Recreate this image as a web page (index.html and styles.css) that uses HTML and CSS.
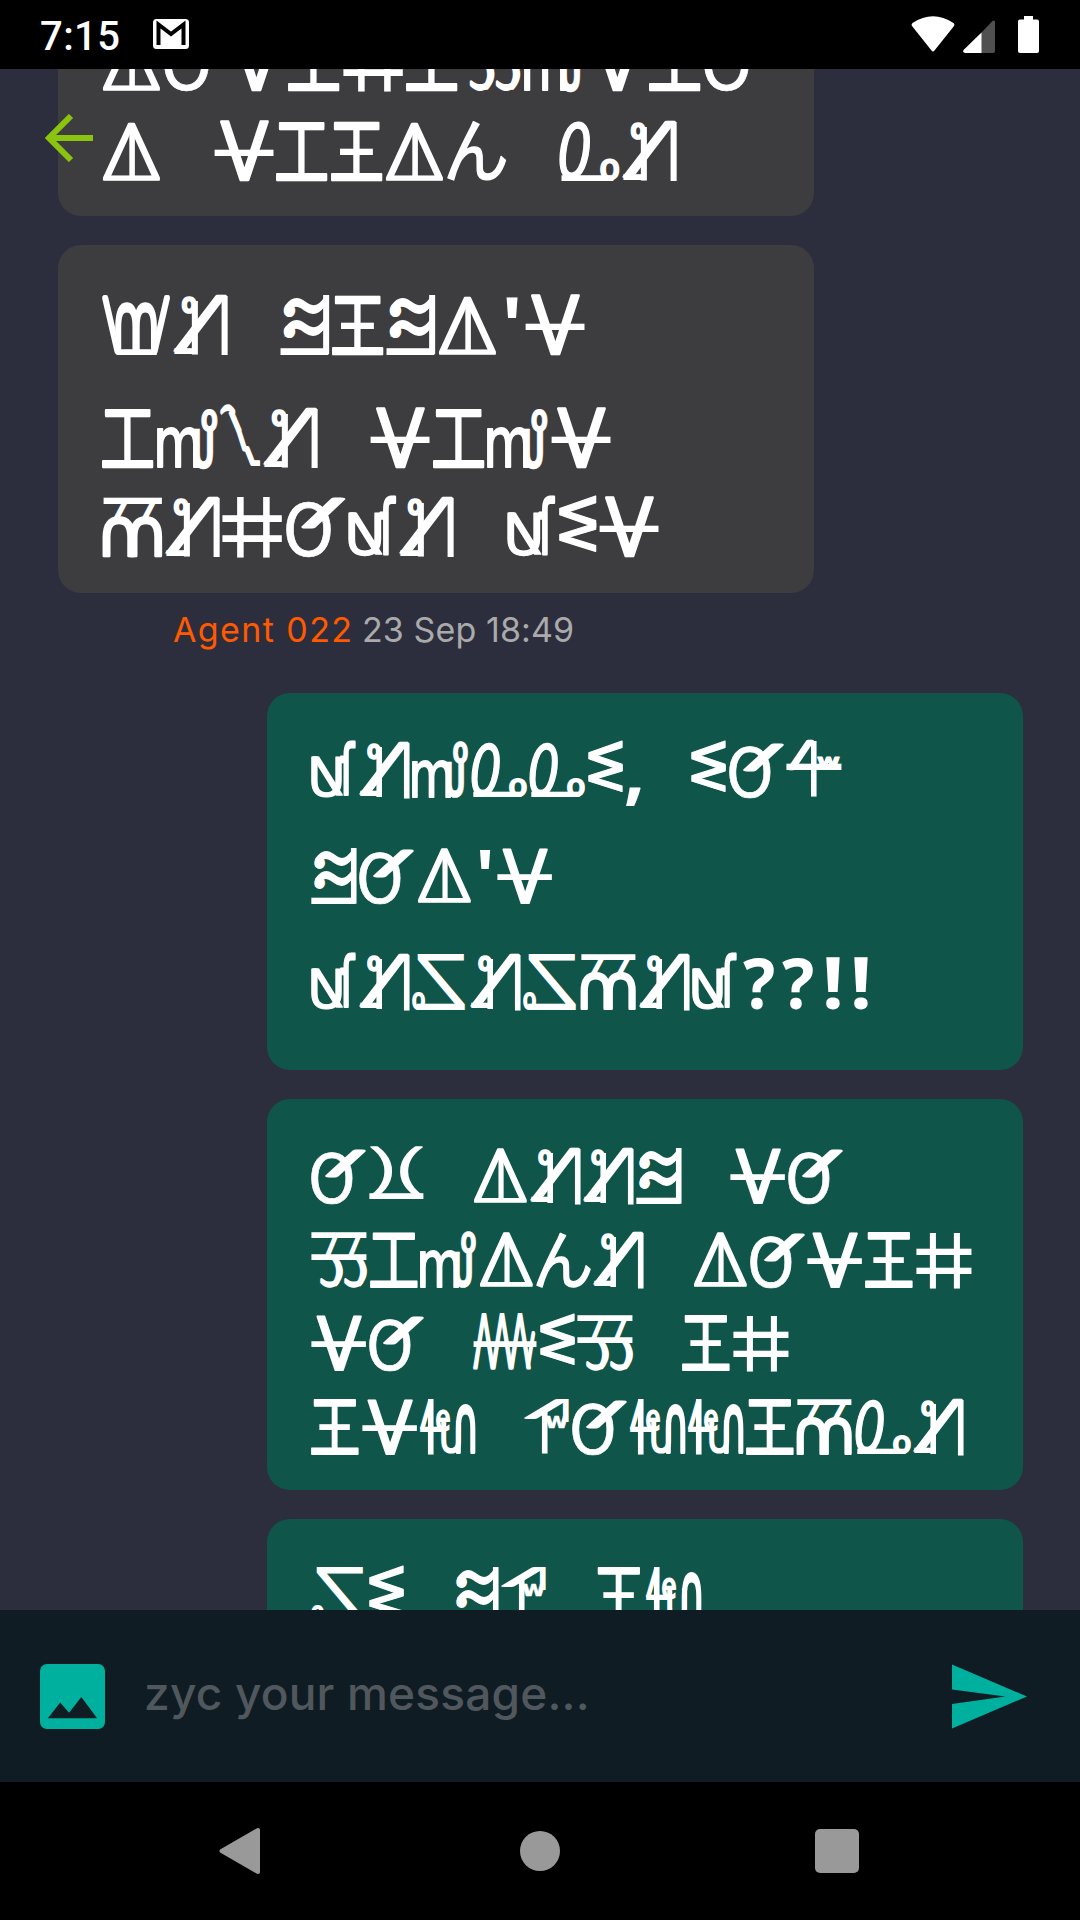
FILE: index.html
```html
<!DOCTYPE html>
<html lang="en">
<head>
<meta charset="utf-8">
<title>Secret chat</title>
<link rel="stylesheet" href="styles.css">
</head>
<body>
<div class="phone">
  <header class="status">
    <span class="clock">7:15</span>
    <svg class="mail" viewBox="0 0 36 30"><rect width="36" height="30" rx="3.500" fill="#fff"/><path d="M5.500 26V5.500L18 15 30.500 5.500V26" fill="none" stroke="#000" stroke-width="4"/></svg>
    <span class="spacer"></span>
    <svg class="wifi" viewBox="0 0 44 36"><path d="M1.500 7Q22-6.500 42.500 7q1.500 1.500.5 3L23.500 34.500q-1.500 2-3 0L1 10Q0 8.500 1.500 7z" fill="#fff"/></svg>
    <svg class="signal" viewBox="0 0 32 33"><path d="M18 13 29.500 1Q32-.5 32 2v29q0 2-2 2H18z" fill="#505050"/><path d="M18.500 12.500V33H2q-3-1-1-3.500z" fill="#fff"/></svg>
    <svg class="battery" viewBox="0 0 21 37"><path d="M6 0h9v3.500h4q2 0 2 2V35q0 2-2 2H2q-2 0-2-2V5.500q0-2 2-2h4z" fill="#fff"/></svg>
  </header>

  <main class="chat">
    <svg class="back" viewBox="0 0 48 48"><path d="M26 2 4 24l22 22M4 24h44" fill="none" stroke="#8bc40f" stroke-width="6"/></svg>

    <section class="bubble theirs first">
      <p class="line">⍋Ơ∀王⌗王羽m∀王Ơ</p>
      <p class="line">⍋ ∀工王⍋ん ՁИ</p>
    </section>
    <section class="bubble theirs second">
      <p class="line wide">ШИ ヨ王ヨ⍋'∀</p>
      <p class="line">工mʅИ ∀工m∀</p>
      <p class="line">而И⌗ƠⱳИ ⱳΣ∀</p>
    </section>
    <div class="meta"><span class="agent">Agent 022</span><time>23 Sep 18:49</time></div>
    <section class="bubble mine third">
      <p class="line">ⱳИmՁՁΣ, ΣƠ4</p>
      <p class="line">ヨƠ⍋'∀</p>
      <p class="line">ⱳИZИZ而Иⱳ??!!</p>
    </section>
    <section class="bubble mine fourth">
      <p class="line">Ơ⊻ ⍋ИИヨ ∀Ơ</p>
      <p class="line">羽工m⍋んИ ⍋Ơ∀王⌗</p>
      <p class="line">∀Ơ ₩Σ羽 王⌗</p>
      <p class="line">王∀ฟ ƤƠฟฟ王而ՁИ</p>
    </section>
    <section class="bubble mine fifth">
      <p class="line">ZΣ ヨƤ 王ฟ</p>
    </section>
  </main>

  <footer class="composer">
    <svg class="photo" viewBox="0 0 66 66"><rect width="66" height="66" rx="7" fill="#00b09e"/><path d="M8 55 20.500 39l9 10.500L42 33.500 58 55z" fill="#101c23"/></svg>
    <span class="hint">zyc your message...</span>
    <svg class="send" viewBox="0 0 76 65"><path d="M0 0 76 32.500 0 65V40l54-7.500L0 25.500z" fill="#00b09e"/></svg>
  </footer>

  <nav class="keys">
    <svg viewBox="0 0 48 48"><path d="M39 3v42L2.500 24z" fill="#999" stroke="#999" stroke-width="4" stroke-linejoin="round"/></svg>
    <svg viewBox="0 0 48 48"><circle cx="24" cy="24" r="20" fill="#999"/></svg>
    <svg viewBox="0 0 48 48"><rect x="2" y="2" width="44" height="44" rx="5" fill="#999"/></svg>
  </nav>
</div>
<script src="signs.js"></script>
</body>
</html>
```

FILE: styles.css
```css
* { box-sizing: border-box; }
body { margin: 0; background: #000; }
.phone {
  width: 1080px; height: 1920px;
  display: flex; flex-direction: column;
  overflow: hidden; background: #2c2e3e;
  font-family: Inter, "Noto Sans", sans-serif;
}
.status {
  flex: none; height: 69px; background: #000; color: #fff;
  display: flex; align-items: center; padding: 0 41px 0 40px;
}
.clock { font: 500 40px/69px Roboto, sans-serif; letter-spacing: 0.4px; padding-top: 3px; }
.mail { width: 36px; height: 30px; margin: 0 0 1px 33px; }
.spacer { flex: 1; }
.wifi { width: 44px; height: 36px; margin-bottom: 1px; }
.signal { width: 32px; height: 33px; margin: 4px 23px 0 8px; }
.battery { width: 21px; height: 37px; }

.chat {
  flex: none; position: relative; height: 1541px;
  overflow: hidden; display: flex; flex-direction: column;
}
.back { position: absolute; left: 45px; top: 45px; width: 48px; height: 48px; }
.bubble {
  flex: none; width: 756px; border-radius: 23px;
  display: flex; flex-direction: column;
  margin-bottom: 29px; padding-left: 44px;
}
.theirs { background: #3d3d3f; margin-left: 58px; --unit: 1.08; }
.mine { background: #10554a; margin-left: 267px; --unit: 1; }
.first { height: 187px; margin-top: -40px; padding-top: 2px; gap: 30px; }
.second { height: 348px; padding-top: 50px; gap: 28.500px; margin-bottom: 0; }
.third { height: 377px; padding-top: 49px; gap: 50px; }
.fourth { height: 391px; padding-top: 49px; gap: 27.500px; }
.fifth { height: 391px; padding-top: 48px; }
.line {
  margin: 0; display: flex; white-space: pre; color: #fff;
  gap: calc(2.5px * var(--unit)); height: calc(56px * var(--unit));
  font: 40px "DejaVu Sans", "Noto Sans CJK JP", sans-serif;
}
.wide { margin-bottom: 24px; }
.sign { flex: none; overflow: visible; fill: #fff; stroke: #fff; stroke-linejoin: round; }

.meta {
  flex: none; height: 100px; padding: 15px 0 0 173px;
  display: flex; gap: 11px; font-size: 34px; line-height: 44px;
}
.agent { color: #ff5a00; width: 178px; letter-spacing: 1.4px; white-space: nowrap; }
.meta time { color: #aaa; white-space: nowrap; letter-spacing: 0.1px; }

.composer {
  flex: none; height: 172px; background: #101c23;
  display: flex; align-items: center; padding: 0 53px 0 40px;
}
.photo { width: 65px; height: 65px; }
.hint { flex: 1; margin-left: 39px; padding-bottom: 7px; color: #50585d; font-size: 46px; font-weight: 500; letter-spacing: 0.2px; }
.send { width: 75px; height: 65px; }

.keys { flex: 1; background: #000; display: flex; justify-content: center; gap: 249px; padding-top: 45px; }
.keys svg { width: 48px; height: 48px; }
```

FILE: signs.js
```javascript
// Each sign is set on a 56px tall line from one or more characters:
// [advance, [character, x, y, width, height, font, outline, mirrored], ...]
const SANS = '100px "DejaVu Sans"';
const BOLD = 'bold 100px "DejaVu Sans"';
const SLANT = 'oblique 100px "DejaVu Sans"';
const NOTO = 'bold 100px "Noto Sans"';
const LIGHT = '300 100px "Open Sans"';
const CJK = '100px "Noto Sans CJK JP"';
const SIGNS = {
  "⍋": [54.5, ["Δ", 0, 1, 54.5, 54, LIGHT, 2], ["|", 25, 5, 5.5, 48, SANS, 0]],
  "∀": [55.5, ["V", 5, 0, 46, 56, SANS, 3], ["—", 0, 25.5, 55.5, 6.5, SANS, 0]],
  "工": [48, ["工", 0, 1, 48, 55, CJK, 3]],
  "王": [48, ["工", 0, 0, 48, 56, CJK, 3], ["—", 8, 25, 31, 6.5, SANS, 0]],
  "⌗": [56, ["|", 13.5, 0, 6.5, 56, SANS, 0], ["|", 37.5, 0, 6.5, 56, SANS, 0], ["—", 0, 16, 56, 7, SANS, 0], ["—", 0, 35, 56, 7, SANS, 0]],
  "羽": [56, ["—", 0, 0, 56, 6.5, SANS, 0], ["—", 0, 22, 56, 6.5, SANS, 0], ["/", 14, 3, 13, 22, LIGHT, 10], ["/", 37, 3, 13, 22, LIGHT, 10], [")", 20, 25, 12, 29, SANS, 8], ["‿", 9, 46, 19, 10, SANS, 10], [")", 44, 25, 12, 29, SANS, 8], ["‿", 33, 46, 19, 10, SANS, 10]],
  "m": [56, ["m", 0, 18, 39, 38, SANS, 3], ["U", 34, 19, 18, 37, BOLD, 1], ["o", 41, 0, 15, 22, BOLD, 2]],
  "ん": [55, ["ん", 0, 0, 55, 56, CJK, 2]],
  "Ձ": [56, ["0", 0, 0, 29, 54, SLANT, 2], ["—", 2, 49, 49, 6, SANS, 0], ["o", 38, 35, 18, 20, BOLD, 0]],
  "И": [50.5, ["/", 0, 0, 50, 53, LIGHT, 2], ["|", 44.5, 1, 6, 55, SANS, 0], ["|", 17, 6, 6, 49, SANS, 0], ["o", 8, 1, 14, 17, BOLD, 5], ["—", 1, 48, 20, 6, SANS, 0]],
  "Ш": [63, ["\\", 0, 0, 17, 55, LIGHT, 8], ["/", 46, 0, 17, 55, LIGHT, 8], ["—", 13, 49, 38, 6, SANS, 0], ["∩", 12, 7, 22, 46, SANS, 5], ["∩", 29, 7, 22, 46, SANS, 5]],
  "ヨ": [45.5, ["~", 4, 1, 38, 19, SANS, 0], ["~", 4, 21, 38, 19, SANS, 0], ["•", 3, 8, 11, 12, SANS, 0], ["•", 3, 28, 11, 12, SANS, 0], ["|", 39.5, 0, 6, 55, SANS, 0], ["—", 0, 49, 45, 7, SANS, 0]],
  "ʅ": [37.5, ["⌒", 0, -3, 14, 10, SANS, 14], ["\\", 8, 2, 12, 20, LIGHT, 16], ["\\", 15, 18, 10, 22, LIGHT, 18], ["\\", 22, 36, 11, 18, LIGHT, 18], ["—", 29, 47, 8, 6, SANS, 0]],
  "而": [56, ["—", 1, 0, 55, 6.5, SANS, 0], ["/", 9, 3, 15, 21, LIGHT, 9], ["/", 35, 3, 15, 21, LIGHT, 9], ["∩", 0, 18, 31, 38, SANS, 4], ["∩", 25, 18, 31, 38, SANS, 4]],
  "ⱳ": [45.5, ["\\", 1, 14, 31, 40, LIGHT, 3], ["U", 0, 14, 31, 41, SANS, 2], ["ſ", 29, -2, 16, 56, SANS, 4]],
  "Σ": [35, ["<", 0, -2, 35, 31, BOLD, 2], ["<", 0, 23, 35, 28, BOLD, 2]],
  "Ơ": [55, ["O", 0, 4, 42, 52, SANS, 1], ["/", 14, 1, 41, 28, LIGHT, 8]],
  "4": [56, ["/", 1, -2, 27, 30, LIGHT, 6], ["|", 24.5, -2, 6, 56, SANS, 0], ["—", 0, 21, 56, 7, SANS, 0], ["w", 31, 14, 23, 11, BOLD, 5]],
  "Z": [55, ["Z", 4, 0, 49, 56, SANS, 0, true], ["o", 0, 38, 13, 18, BOLD, 0]],
  "⊻": [55, [")", 1, 0, 23, 49, LIGHT, 3], ["(", 31, 0, 23, 49, LIGHT, 3], ["—", 0, 44.5, 55, 6.5, SANS, 0]],
  "₩": [64, ["Λ", 0, -2, 22, 56, SANS, 4], ["Λ", 18, -2, 22, 56, SANS, 4], ["Λ", 36, -2, 22, 56, SANS, 4], ["/", 53, 16, 9, 38, LIGHT, 14], ["—", 0, 26, 64, 6.5, SANS, 0]],
  "ฟ": [55.5, ["/", 0, 1, 12, 30, LIGHT, 10], ["|", 7.5, 0, 6, 55, SANS, 0], ["—", 0, 27, 22, 6, SANS, 0], ["e", 16, 9, 14, 23, BOLD, 0], ["U", 21, 20, 20, 34, SANS, 5], ["∩", 35.5, 5, 20, 50, SANS, 5]],
  "Ƥ": [45.5, ["/", 0, 0, 44, 20, LIGHT, 7], ["|", 17.5, 10, 6, 45, SANS, 0], ["|", 38.5, 1, 6, 23, SANS, 0], ["w", 21, 17, 23, 12, BOLD, 2]],
  "'": [10.5, ["'", 0, 2, 10.5, 19, NOTO, 0]],
  ",": [15, [",", 0, 45, 15, 19, NOTO, 0]],
  "?": [31, ["?", 0, 3, 31, 53, NOTO, 0]],
  "!": [14, ["!", 0, 3, 14, 53, NOTO, 0]]
};
// Side space round punctuation: [before, after]
const ROOM = { "'": [6, 4.5], "?": [3, 3], "!": [7, 5], ",": [1, 1] };
const NS = "http://www.w3.org/2000/svg";
const pen = document.createElement("canvas").getContext("2d");

function piece([ch, x, y, w, h, font, outline, mirrored], before) {
  pen.font = font;
  const m = pen.measureText(ch);
  const left = m.actualBoundingBoxLeft + outline / 2;
  const up = m.actualBoundingBoxAscent + outline / 2;
  const sx = w / (left + m.actualBoundingBoxRight + outline / 2);
  const sy = h / (up + m.actualBoundingBoxDescent + outline / 2);
  const text = document.createElementNS(NS, "text");
  text.textContent = ch;
  text.style.font = font;
  text.setAttribute("stroke-width", outline);
  const dx = before + x + (mirrored ? w - left * sx : left * sx);
  text.setAttribute("transform", `matrix(${mirrored ? -sx : sx} 0 0 ${sy} ${dx} ${y + up * sy})`);
  return text;
}

for (const line of document.querySelectorAll(".line")) {
  const unit = parseFloat(getComputedStyle(line).getPropertyValue("--unit"));
  const chars = [...line.textContent];
  line.textContent = "";
  for (const ch of chars) {
    const [w, ...pieces] = SIGNS[ch] || [44];
    const [before, after] = ROOM[ch] || [0, 0];
    const svg = document.createElementNS(NS, "svg");
    svg.setAttribute("class", "sign");
    svg.setAttribute("width", (w + before + after) * unit);
    svg.setAttribute("height", 56 * unit);
    svg.setAttribute("viewBox", `0 0 ${w + before + after} 56`);
    svg.append(...pieces.map(p => piece(p, before)));
    line.append(svg);
  }
}
```
